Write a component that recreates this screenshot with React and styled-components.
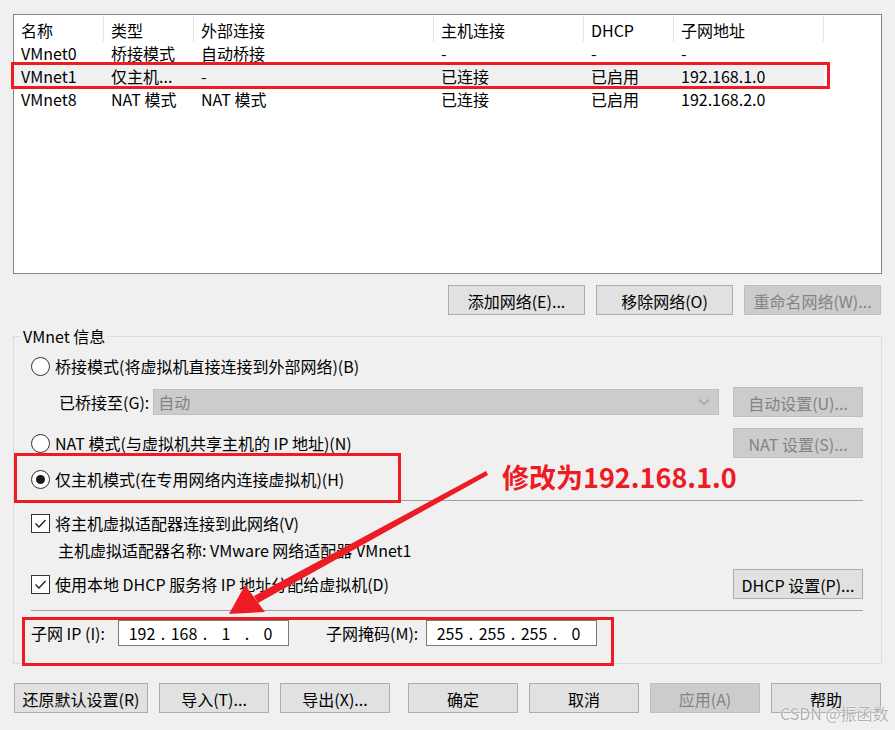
import React from "react";
import styled, { createGlobalStyle } from "styled-components";

const Global = createGlobalStyle`
  html, body { margin: 0; padding: 0; background: #f0f0f0; }
  body { font-family: "Noto Sans CJK SC", "Noto Sans", sans-serif; font-size: 16px; color: #000; }
  * { box-sizing: border-box; }
`;

const Page = styled.div`
  position: relative;
  width: 895px;
  height: 730px;
  overflow: hidden;
  padding: 14px 13px 0 13px;
  display: flex;
  flex-direction: column;
`;

const Table = styled.div`
  height: 260px;
  background: #fff;
  border: 1px solid #828790;
  display: grid;
  grid-template-columns: 90px 90px 240px 150px 90px 150px 1fr;
  grid-auto-rows: 23px;
  grid-template-rows: 26px;
  align-content: start;
`;

const HeadCell = styled.div`
  height: 26px;
  padding: 1px 0 0 7px;
  display: flex;
  align-items: center;
  border-right: ${(p) => (p.$last ? "none" : "1px solid #e5e5e5")};
  margin-top: 1px;
  white-space: nowrap;
`;

const Cell = styled.div`
  display: flex;
  align-items: center;
  padding-left: 7px;
  white-space: nowrap;
  background: ${(p) => (p.$sel ? "#f0f0f0" : "transparent")};
`;

const ButtonBar = styled.div`
  display: flex;
  justify-content: ${(p) => p.$justify || "flex-end"};
  gap: 11px;
  margin-top: ${(p) => p.$mt}px;
  padding-right: ${(p) => p.$pr || 0}px;
  padding-left: ${(p) => p.$pl || 0}px;
`;

const ButtonGroup = styled.div`
  display: flex;
  gap: 11px;
`;

const Button = styled.div`
  width: ${(p) => p.$w}px;
  height: 30px;
  flex: none;
  display: flex;
  align-items: center;
  justify-content: center;
  background: ${(p) => (p.$disabled ? "#cccccc" : "#e1e1e1")};
  border: 1px solid ${(p) => (p.$disabled ? "#bfbfbf" : "#adadad")};
  color: ${(p) => (p.$disabled ? "#838383" : "#000")};
  white-space: nowrap;
  padding-top: 1px;
`;

const Group = styled.div`
  position: relative;
  margin-top: 21px;
  border: 1px solid #dcdcdc;
  padding: 0 18px 17px 17px;
  display: flex;
  flex-direction: column;
`;

const Legend = styled.span`
  position: absolute;
  top: -12px;
  left: 7px;
  padding: 0 2px;
  background: #f0f0f0;
  line-height: 22px;
`;

const Row = styled.div`
  display: flex;
  align-items: center;
  height: ${(p) => p.$h || 30}px;
  margin-top: ${(p) => p.$mt || 0}px;
  padding-left: ${(p) => p.$indent || 0}px;
  white-space: nowrap;
`;

const Spacer = styled.div`
  flex: 1;
`;

const Separator = styled.div`
  height: 1px;
  background: #a0a0a0;
  margin-top: ${(p) => p.$mt}px;
`;

const RadioCircle = styled.span`
  width: 19px;
  height: 19px;
  border-radius: 50%;
  border: 1px solid #333;
  background: #fff;
  flex: none;
  display: flex;
  align-items: center;
  justify-content: center;
  margin-right: 5px;
  &::after {
    content: "";
    width: 9px;
    height: 9px;
    border-radius: 50%;
    background: #1a1a1a;
    display: ${(p) => (p.$checked ? "block" : "none")};
  }
`;

const CheckBox = styled.span`
  width: 19px;
  height: 19px;
  border: 1px solid #333;
  background: #fff;
  flex: none;
  display: flex;
  align-items: center;
  justify-content: center;
  margin-right: 5px;
`;

const Select = styled.div`
  width: 566px;
  height: 26px;
  margin-left: 4px;
  background: #cccccc;
  border: 1px solid #bfbfbf;
  color: #838383;
  display: flex;
  align-items: center;
  padding: 0 8px 0 4px;
`;

const FieldLabel = styled.span`
  width: ${(p) => (p.$w ? `${p.$w}px` : "auto")};
  margin-left: ${(p) => p.$ml || 0}px;
  flex: none;
`;

const IpBox = styled.div`
  width: ${(p) => p.$w}px;
  height: 26px;
  background: #fff;
  border: 1px solid #7a7a7a;
  display: flex;
  align-items: center;
  padding-left: 7px;
  flex: none;
`;

const Seg = styled.span`
  width: 32px;
  text-align: center;
`;

const Dot = styled.span`
  width: 10px;
  text-align: center;
`;

const Annot = styled.div`
  position: absolute;
  inset: 0;
  pointer-events: none;
`;

const RedBox = styled.div`
  position: absolute;
  border: 3px solid #ed1c24;
`;

const RedText = styled.div`
  position: absolute;
  left: 502px;
  top: 458px;
  color: #ed1c24;
  font-weight: 700;
  font-size: 27px;
  line-height: 38px;
  white-space: nowrap;
`;

const Watermark = styled.div`
  position: absolute;
  left: 780px;
  top: 701px;
  font-size: 16px;
  line-height: 24px;
  color: rgba(110, 110, 110, 0.55);
  text-shadow: 0 0 1px #fff, 0 0 2px #fff;
  white-space: nowrap;
`;

function Check() {
  return (
    <svg width="13" height="11" viewBox="0 0 13 11">
      <path d="M1.5 5.5 L5 9 L11.5 2" fill="none" stroke="#222" strokeWidth="1.4" />
    </svg>
  );
}

function Chevron() {
  return (
    <svg width="12" height="8" viewBox="0 0 12 8">
      <path d="M1 1.5 L6 6.5 L11 1.5" fill="none" stroke="#a0a0a0" strokeWidth="1.1" />
    </svg>
  );
}

function Ip({ parts, w }) {
  return (
    <IpBox $w={w}>
      {parts.map((p, i) => (
        <React.Fragment key={i}>
          {i > 0 && <Dot>.</Dot>}
          <Seg>{p}</Seg>
        </React.Fragment>
      ))}
    </IpBox>
  );
}

const heads = ["名称", "类型", "外部连接", "主机连接", "DHCP", "子网地址", ""];
const rows = [
  ["VMnet0", "桥接模式", "自动桥接", "-", "-", "-"],
  ["VMnet1", "仅主机...", "-", "已连接", "已启用", "192.168.1.0"],
  ["VMnet8", "NAT 模式", "NAT 模式", "已连接", "已启用", "192.168.2.0"],
];

export default function App() {
  return (
    <>
      <Global />
      <Page>
        <Table>
          {heads.map((h, i) => (
            <HeadCell key={i} $last={i === heads.length - 1}>
              {h}
            </HeadCell>
          ))}
          {rows.map((r, ri) => (
            <React.Fragment key={ri}>
              {r.map((c, ci) => (
                <Cell key={ci} $sel={ri === 1}>
                  {c}
                </Cell>
              ))}
              <Cell />
            </React.Fragment>
          ))}
        </Table>

        <ButtonBar $mt={11} $pr={1}>
          <Button $w={137}>添加网络(E)...</Button>
          <Button $w={137}>移除网络(O)</Button>
          <Button $w={137} $disabled>
            重命名网络(W)...
          </Button>
        </ButtonBar>

        <Group>
          <Legend>VMnet 信息</Legend>
          <Row $mt={14}>
            <RadioCircle />
            桥接模式(将虚拟机直接连接到外部网络)(B)
          </Row>
          <Row $mt={6} $indent={28}>
            <FieldLabel>已桥接至(G):</FieldLabel>
            <Select>
              自动
              <Spacer />
              <Chevron />
            </Select>
            <Spacer />
            <Button $w={130} $disabled>
              自动设置(U)...
            </Button>
          </Row>
          <Row $mt={11}>
            <RadioCircle />
            NAT 模式(与虚拟机共享主机的 IP 地址)(N)
            <Spacer />
            <Button $w={130} $disabled>
              NAT 设置(S)...
            </Button>
          </Row>
          <Row $mt={6}>
            <RadioCircle $checked />
            仅主机模式(在专用网络内连接虚拟机)(H)
          </Row>
          <Separator $mt={6} />
          <Row $mt={10} $h={24}>
            <CheckBox>
              <Check />
            </CheckBox>
            将主机虚拟适配器连接到此网络(V)
          </Row>
          <Row $mt={3} $h={24} $indent={27}>
            主机虚拟适配器名称: VMware 网络适配器 VMnet1
          </Row>
          <Row $mt={7}>
            <CheckBox>
              <Check />
            </CheckBox>
            使用本地 DHCP 服务将 IP 地址分配给虚拟机(D)
            <Spacer />
            <Button $w={130}>DHCP 设置(P)...</Button>
          </Row>
          <Separator $mt={11} />
          <Row $mt={9} $h={26}>
            <FieldLabel $w={87}>子网 IP (I):</FieldLabel>
            <Ip w={171} parts={["192", "168", "1", "0"]} />
            <FieldLabel $w={100} $ml={37}>
              子网掩码(M):
            </FieldLabel>
            <Ip w={171} parts={["255", "255", "255", "0"]} />
          </Row>
        </Group>

        <ButtonBar $mt={19} $justify="space-between" $pl={1} $pr={1}>
          <ButtonGroup>
            <Button $w={134}>还原默认设置(R)</Button>
            <Button $w={110}>导入(T)...</Button>
            <Button $w={110}>导出(X)...</Button>
          </ButtonGroup>
          <ButtonGroup>
            <Button $w={110}>确定</Button>
            <Button $w={110}>取消</Button>
            <Button $w={110} $disabled>
              应用(A)
            </Button>
            <Button $w={110}>帮助</Button>
          </ButtonGroup>
        </ButtonBar>

        <Annot>
          <RedBox style={{ left: 11, top: 62, width: 819, height: 27 }} />
          <RedBox style={{ left: 14, top: 453, width: 387, height: 50 }} />
          <RedBox style={{ left: 22, top: 617, width: 592, height: 49 }} />
          <svg width="895" height="730" style={{ position: "absolute", left: 0, top: 0 }}>
            <polygon points="486,471 488,475 258,603 254,596" fill="#ed1c24" />
            <polygon points="229,614 245,585 265,612" fill="#ed1c24" />
          </svg>
          <RedText>修改为192.168.1.0</RedText>
          <Watermark>CSDN @振函数</Watermark>
        </Annot>
      </Page>
    </>
  );
}
